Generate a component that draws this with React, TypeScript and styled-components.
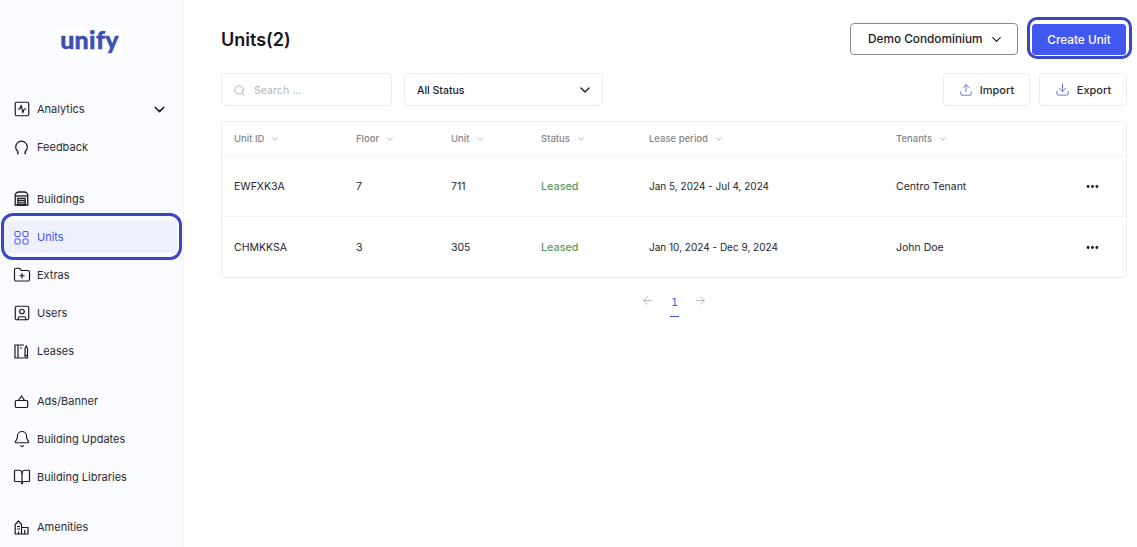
import React from "react";
import styled, { createGlobalStyle } from "styled-components";
import {
  ArrowLeft,
  ArrowRight,
  BookOpen,
  Bell,
  ChevronDown,
  Download,
  Ellipsis,
  FolderPlus,
  Search,
  SquareActivity,
  SquareUser,
  Upload,
} from "lucide-react";

const GlobalStyle = createGlobalStyle`
  html, body {
    margin: 0;
    padding: 0;
    height: 100%;
    background: #fff;
    overflow: hidden;
  }
  body {
    font-family: "Inter", "Open Sans", sans-serif;
    color: #1b1b1f;
  }
  *, *::before, *::after { box-sizing: border-box; }
`;

const Page = styled.div`
  display: flex;
  width: 1137px;
  height: 547px;
  overflow: hidden;
`;

const Sidebar = styled.aside`
  width: 184px;
  flex: none;
  background: #fafbff;
  border-right: 1px solid #f3f4f8;
  padding: 27px 4px 0;
`;

const LogoBox = styled.div`
  width: 65px;
  height: 28px;
  margin: 0 0 0 53px;
  padding-bottom: 3px;
  background: #fff;
  display: flex;
  align-items: center;
  justify-content: center;
`;

const LogoText = styled.span`
  font-family: "Lato", sans-serif;
  font-weight: 900;
  font-size: 25px;
  letter-spacing: 0.3px;
  line-height: 25px;
  color: #3c50b4;
  -webkit-text-stroke: 0.5px #3c50b4;
`;

const Nav = styled.nav`
  margin-top: 35px;
  display: flex;
  flex-direction: column;
  gap: 12px;
`;

const NavGroup = styled.div`
  display: flex;
  flex-direction: column;
  &:first-child {
    margin-bottom: 1px;
  }
`;

const NavItem = styled.div<{ $active?: boolean; $tall?: boolean }>`
  position: relative;
  height: ${(p) => (p.$tall ? 39 : 38)}px;
  display: flex;
  align-items: center;
  gap: 8px;
  padding-left: 10px;
  font-size: 11px;
  font-weight: 400;
  color: ${(p) => (p.$active ? "#4353f4" : "#2b2b33")};
  background: ${(p) =>
    p.$active
      ? "linear-gradient(#eef0fd, #eef0fd) no-repeat 0 3px / calc(100% - 2px) calc(100% - 6px)"
      : "none"};
`;

const NavIcon = styled.span`
  width: 15px;
  height: 15px;
  flex: none;
  display: flex;
  align-items: center;
  justify-content: center;
`;

const NavRing = styled.span`
  position: absolute;
  left: -3px;
  top: -5px;
  width: 181px;
  height: 47px;
  border: 3px solid #3a47c2;
  border-radius: 12px;
`;

const NavCaret = styled.span`
  margin-left: auto;
  margin-right: 11px;
  display: flex;
  color: #1b1b1f;
`;

const Main = styled.main`
  flex: 1;
  padding: 23px 10px 0 37px;
`;

const HeaderRow = styled.div`
  display: flex;
  align-items: center;
  height: 33px;
`;

const Title = styled.h1`
  margin: 0;
  font-size: 18px;
  font-weight: 600;
  color: #17171c;
  flex: 1;
`;

const SiteSelect = styled.div`
  align-self: flex-start;
  width: 168px;
  height: 32px;
  border: 1px solid #8a8a8a;
  border-radius: 4px;
  display: flex;
  align-items: center;
  gap: 6px;
  padding-left: 17px;
  font-size: 11.8px;
  font-weight: 500;
  margin-right: 13px;
`;

const CreateButton = styled.button`
  position: relative;
  width: 96px;
  height: 33px;
  border: 1px solid #fff;
  border-radius: 4px;
  background: #4257f0;
  color: #fff;
  font: 500 11.8px "Inter", sans-serif;
  &::after {
    content: "";
    position: absolute;
    left: -5px;
    top: -7px;
    width: 105px;
    height: 42px;
    border: 3px solid #3a47c2;
    border-radius: 10px;
  }
`;

const Toolbar = styled.div`
  margin-top: 17px;
  display: flex;
  align-items: center;
`;

const SearchBox = styled.div`
  width: 171px;
  height: 33px;
  border: 1px solid #ececf0;
  border-radius: 4px;
  display: flex;
  align-items: center;
  gap: 8px;
  padding: 1px 0 0 11px;
  font-size: 10.6px;
  color: #b4b4ba;
`;

const StatusSelect = styled.div`
  width: 199px;
  height: 33px;
  margin-left: 12px;
  border: 1px solid #ececf0;
  border-radius: 4px;
  display: flex;
  align-items: center;
  justify-content: space-between;
  padding: 1px 9px 0 12px;
  font-size: 10.5px;
  font-weight: 500;
`;

const ActionButton = styled.div<{ $width: number; $gap: number }>`
  width: ${(p) => p.$width}px;
  margin-left: ${(p) => p.$gap}px;
  height: 33px;
  border: 1px solid #ececf0;
  border-radius: 4px;
  display: flex;
  align-items: center;
  justify-content: center;
  gap: 7px;
  font-size: 11px;
  font-weight: 500;
  color: #2b2b33;
`;

const Spacer = styled.div`
  flex: 1;
`;

const TableCard = styled.div`
  margin-top: 15px;
  border: 1px solid #ececf0;
  border-radius: 4px;
`;

const Row = styled.div<{ $head?: boolean }>`
  display: grid;
  grid-template-columns: 122px 95px 90px 108px 247px 189px 1fr;
  align-items: center;
  height: ${(p) => (p.$head ? 34 : 61)}px;
  padding-left: 12px;
  border-bottom: 1px solid #f2f2f5;
  font-size: ${(p) => (p.$head ? 9.5 : 10.5)}px;
  color: ${(p) => (p.$head ? "#85858c" : "#26262c")};
  &:last-child {
    border-bottom: none;
    height: 60px;
  }
`;

const HeadCell = styled.div`
  display: flex;
  align-items: center;
  gap: 6px;
  font-weight: 500;
`;

const LeaseCell = styled.div`
  font-size: 10px;
`;

const Leased = styled.span`
  color: #5a9a5e;
  font-weight: 500;
  font-size: 10.8px;
`;

const Dots = styled.div`
  display: flex;
  color: #111;
`;

const Pager = styled.div`
  margin-top: 16px;
  margin-left: 420px;
  display: flex;
  align-items: flex-start;
  color: #9c9ca3;
`;

const PageNumber = styled.div`
  width: 9px;
  margin: 0 15px 0 16px;
  padding-bottom: 6px;
  border-bottom: 1px solid #4353f4;
  color: #4353f4;
  font-family: "DejaVu Sans", sans-serif;
  font-size: 10.5px;
  line-height: 16px;
  text-align: center;
`;

const UnitsIcon = () => (
  <svg width="15" height="15" viewBox="0 0 15 15" fill="none" stroke="#4353f4" strokeWidth="1">
    <rect x="1" y="1.500" width="5" height="5" rx="1" />
    <rect x="9" y="1.500" width="5" height="5" rx="1" />
    <rect x="1" y="9" width="5" height="5" rx="1" />
    <rect x="9" y="9" width="5" height="5" rx="1" />
  </svg>
);

const FeedbackIcon = () => (
  <svg width="15" height="15" viewBox="0 0 15 15" fill="none" stroke="#1b1b1f" strokeWidth="1.200">
    <path d="M3.800 11.500C2.300 10.400 1.700 8.900 1.700 7.300 1.700 3.800 4.300 1.200 7.500 1.200s5.800 2.600 5.800 6.100c0 1.600-.6 3.100-2.100 4.200" />
    <path d="M3.800 11.300v2.900M11.200 11.300v2.900" strokeWidth="1.500" />
  </svg>
);

const BuildingsIcon = () => (
  <svg width="15" height="15" viewBox="0 0 15 15" fill="none" stroke="#1b1b1f" strokeWidth="1.300">
    <path d="M1.200 14V4.500C1.200 2.500 3 1 5 1h5c2 0 3.800 1.500 3.800 3.500V14z" />
    <path d="M1.200 5h12.600" />
    <path d="M3.800 7.500h7.400v6.500H3.800zM3.800 9.700h7.400M3.800 11.800h7.400" />
  </svg>
);

const LeasesIcon = () => (
  <svg width="15" height="15" viewBox="0 0 15 15" fill="none" stroke="#1b1b1f" strokeWidth="1.200">
    <path d="M10 1H1v13h9" />
    <path d="M4 1v13" />
    <path d="M6 4h2" />
    <path d="M11 4.500l1.200-2.500 1.300 2.500V14H11z" />
    <path d="M11 11.500h2.500" />
  </svg>
);

const AdsIcon = () => (
  <svg width="15" height="15" viewBox="0 0 15 15" fill="none" stroke="#1b1b1f" strokeWidth="1.200">
    <path d="M2.500 6.500h10c.8 0 1.200.6 1.200 1.300v4.400c0 .8-.6 1.300-1.300 1.300H2.600c-.8 0-1.300-.5-1.300-1.300V7.800c0-.7.400-1.300 1.200-1.300z" />
    <path d="M4.500 6.300l3-4.300 3 4.300" />
  </svg>
);

const AmenitiesIcon = () => (
  <svg width="15" height="15" viewBox="0 0 15 15" fill="none" stroke="#1b1b1f" strokeWidth="1.200">
    <path d="M1.200 14V4.500L4.500 1l3 3.500V14z" />
    <path d="M7.500 7.500H14V14H7.500" />
    <path d="M3 6.500h3M3 9h3M4.500 11.500V14M10.700 10v4" />
  </svg>
);

const iconProps = { size: 18, strokeWidth: 1.6, color: "#1b1b1f", style: { flex: "none" } };

const HeadLabel = ({ label }: { label: string }) => (
  <HeadCell>
    {label}
    <ChevronDown size={10} strokeWidth={1.4} />
  </HeadCell>
);

const units = [
  { id: "EWFXK3A", floor: "7", unit: "711", lease: "Jan 5, 2024 - Jul 4, 2024", tenant: "Centro Tenant" },
  { id: "CHMKKSA", floor: "3", unit: "305", lease: "Jan 10, 2024 - Dec 9, 2024", tenant: "John Doe" },
];

export default function App() {
  return (
    <Page>
      <GlobalStyle />
      <Sidebar>
        <LogoBox>
          <LogoText>unify</LogoText>
        </LogoBox>
        <Nav>
          <NavGroup>
            <NavItem>
              <NavIcon><SquareActivity {...iconProps} /></NavIcon>
              Analytics
              <NavCaret>
                <ChevronDown size={17} strokeWidth={2} />
              </NavCaret>
            </NavItem>
            <NavItem>
              <NavIcon><FeedbackIcon /></NavIcon>
              Feedback
            </NavItem>
          </NavGroup>
          <NavGroup>
            <NavItem $tall>
              <NavIcon><BuildingsIcon /></NavIcon>
              Buildings
            </NavItem>
            <NavItem $active>
              <NavIcon><UnitsIcon /></NavIcon>
              Units
              <NavRing />
            </NavItem>
            <NavItem>
              <NavIcon><FolderPlus {...iconProps} /></NavIcon>
              Extras
            </NavItem>
            <NavItem>
              <NavIcon><SquareUser {...iconProps} /></NavIcon>
              Users
            </NavItem>
            <NavItem>
              <NavIcon><LeasesIcon /></NavIcon>
              Leases
            </NavItem>
          </NavGroup>
          <NavGroup>
            <NavItem>
              <NavIcon><AdsIcon /></NavIcon>
              Ads/Banner
            </NavItem>
            <NavItem>
              <NavIcon><Bell {...iconProps} /></NavIcon>
              Building Updates
            </NavItem>
            <NavItem>
              <NavIcon><BookOpen {...iconProps} /></NavIcon>
              Building Libraries
            </NavItem>
          </NavGroup>
          <NavGroup>
            <NavItem>
              <NavIcon><AmenitiesIcon /></NavIcon>
              Amenities
            </NavItem>
          </NavGroup>
        </Nav>
      </Sidebar>
      <Main>
        <HeaderRow>
          <Title>Units(2)</Title>
          <SiteSelect>
            Demo Condominium
            <ChevronDown size={15} strokeWidth={1.8} />
          </SiteSelect>
          <CreateButton>Create Unit</CreateButton>
        </HeaderRow>
        <Toolbar>
          <SearchBox>
            <Search size={13} strokeWidth={1.3} color="#9a9aa2" />
            Search ...
          </SearchBox>
          <StatusSelect>
            All Status
            <ChevronDown size={16} strokeWidth={1.8} color="#111" />
          </StatusSelect>
          <Spacer />
          <ActionButton $width={87} $gap={0}>
            <Upload size={14} strokeWidth={1.3} color="#4353f4" />
            Import
          </ActionButton>
          <ActionButton $width={88} $gap={9}>
            <Download size={15} strokeWidth={1.3} color="#4353f4" />
            Export
          </ActionButton>
        </Toolbar>
        <TableCard>
          <Row $head>
            <HeadLabel label="Unit ID" />
            <HeadLabel label="Floor" />
            <HeadLabel label="Unit" />
            <HeadLabel label="Status" />
            <HeadLabel label="Lease period" />
            <HeadLabel label="Tenants" />
            <div />
          </Row>
          {units.map((u) => (
            <Row key={u.id}>
              <div>{u.id}</div>
              <div>{u.floor}</div>
              <div>{u.unit}</div>
              <Leased>Leased</Leased>
              <LeaseCell>{u.lease}</LeaseCell>
              <div>{u.tenant}</div>
              <Dots>
                <Ellipsis size={15} strokeWidth={2.6} />
              </Dots>
            </Row>
          ))}
        </TableCard>
        <Pager>
          <ArrowLeft size={13} strokeWidth={1.3} />
          <PageNumber>1</PageNumber>
          <ArrowRight size={13} strokeWidth={1.3} />
        </Pager>
      </Main>
    </Page>
  );
}
